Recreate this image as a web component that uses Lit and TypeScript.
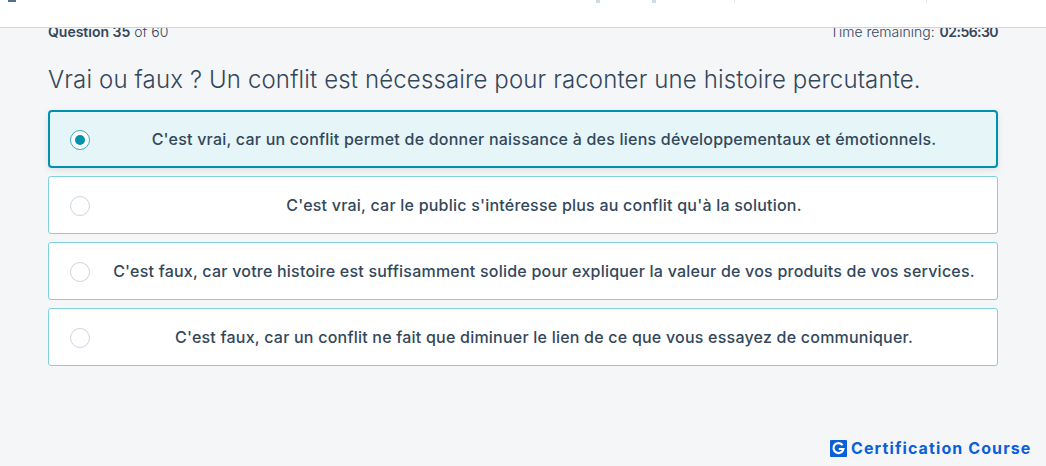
import { LitElement, html, css } from "lit";
import { customElement } from "lit/decorators.js";

const OPTIONS = [
  "C'est vrai, car un conflit permet de donner naissance à des liens développementaux et émotionnels.",
  "C'est vrai, car le public s'intéresse plus au conflit qu'à la solution.",
  "C'est faux, car votre histoire est suffisamment solide pour expliquer la valeur de vos produits de vos services.",
  "C'est faux, car un conflit ne fait que diminuer le lien de ce que vous essayez de communiquer.",
];

@customElement("app-root")
export class AppRoot extends LitElement {
  static styles = css`
    :host {
      display: block;
      width: 1046px;
      height: 466px;
      overflow: hidden;
      background: #f5f6f8;
      color: #33475b;
      font-family: "Inter", "Noto Sans", sans-serif;
    }
    * { box-sizing: border-box; }
    .top {
      height: 28px;
      background: #fff;
      border-bottom: 1px solid #cbd6e2;
      display: flex;
      align-items: flex-start;
      position: relative;
      z-index: 1;
    }
    .dot { width: 8px; height: 2px; margin-left: 8px; background: #516f90; }
    .tick { height: 3px; background: #dfe3eb; }
    .t1 { width: 4px; margin-left: 580px; background: #cfdbe6; }
    .t2 { width: 4px; margin-left: 52px; background: #cfdbe6; }
    .t3 { width: 1px; margin-left: 78px; }
    .t4 { width: 1px; margin-left: 191px; }
    .main { padding: 0 48px; }
    .meta {
      margin-top: -6px;
      height: 18px;
      display: flex;
      justify-content: space-between;
      align-items: center;
      font-size: 14px;
      font-weight: 300;
    }
    .meta b { font-weight: 600; }
    .clock { letter-spacing: -0.55px; margin-left: 1px; }
    h1 {
      margin: 24px 0 0;
      height: 31px;
      font-size: 24px;
      line-height: 31px;
      font-weight: 300;
      letter-spacing: 0.14px;
      color: #33475b;
    }
    .list { margin-top: 15px; display: flex; flex-direction: column; gap: 8px; }
    .opt {
      height: 58px;
      background: #fff;
      border: 1px solid #7fd1de;
      border-radius: 3px;
      display: flex;
      align-items: center;
      padding: 0 21px;
      gap: 22px;
    }
    .opt.sel {
      background: #e5f5f8;
      border: 2px solid #0091ae;
      border-radius: 4px;
      padding: 0 20px;
      box-shadow: 0 2px 6px rgba(45, 62, 80, 0.12);
    }
    .radio {
      flex: none;
      width: 20px;
      height: 20px;
      margin-top: 2px;
      border-radius: 50%;
      border: 1px solid #cbd6e2;
      background: #fff;
      display: flex;
      align-items: center;
      justify-content: center;
    }
    .sel .radio { border-color: #3fa9bf; }
    .sel .radio::after {
      content: "";
      width: 10px;
      height: 10px;
      border-radius: 50%;
      background: #0091ae;
    }
    .label {
      flex: 1;
      text-align: center;
      font-size: 16px;
      font-weight: 500;
      letter-spacing: 0.22px;
      line-height: 20px;
      color: #33475b;
    }
    .brand {
      position: absolute;
      left: 830px;
      top: 439px;
      display: flex;
      align-items: center;
      gap: 4px;
      color: #0b5fd8;
      font-size: 16px;
      font-weight: 700;
      letter-spacing: 1.1px;
      line-height: 18px;
    }
    .brand svg { display: block; }
  `;

  render() {
    return html`
      <div class="top">
        <span class="dot"></span>
        <span class="tick t1"></span>
        <span class="tick t2"></span>
        <span class="tick t3"></span>
        <span class="tick t4"></span>
      </div>
      <div class="main">
        <div class="meta">
          <span><b>Question 35</b> of 60</span>
          <span>Time remaining: <b class="clock">02:56:30</b></span>
        </div>
        <h1>Vrai ou faux ? Un conflit est nécessaire pour raconter une histoire percutante.</h1>
        <div class="list">
          ${OPTIONS.map(
            (t, i) => html`
              <div class="opt ${i === 0 ? "sel" : ""}">
                <span class="radio"></span>
                <span class="label">${t}</span>
              </div>
            `
          )}
        </div>
      </div>
      <div class="brand">
        <svg width="17" height="17" viewBox="0 0 17 17">
          <rect width="17" height="17" rx="1" fill="#0b5fd8"></rect>
          <path d="M12.6 5.2A5 5 0 1 0 13.4 9H8.8" fill="none" stroke="#fff" stroke-width="2.2"></path>
        </svg>
        <span>Certification Course</span>
      </div>
    `;
  }
}
